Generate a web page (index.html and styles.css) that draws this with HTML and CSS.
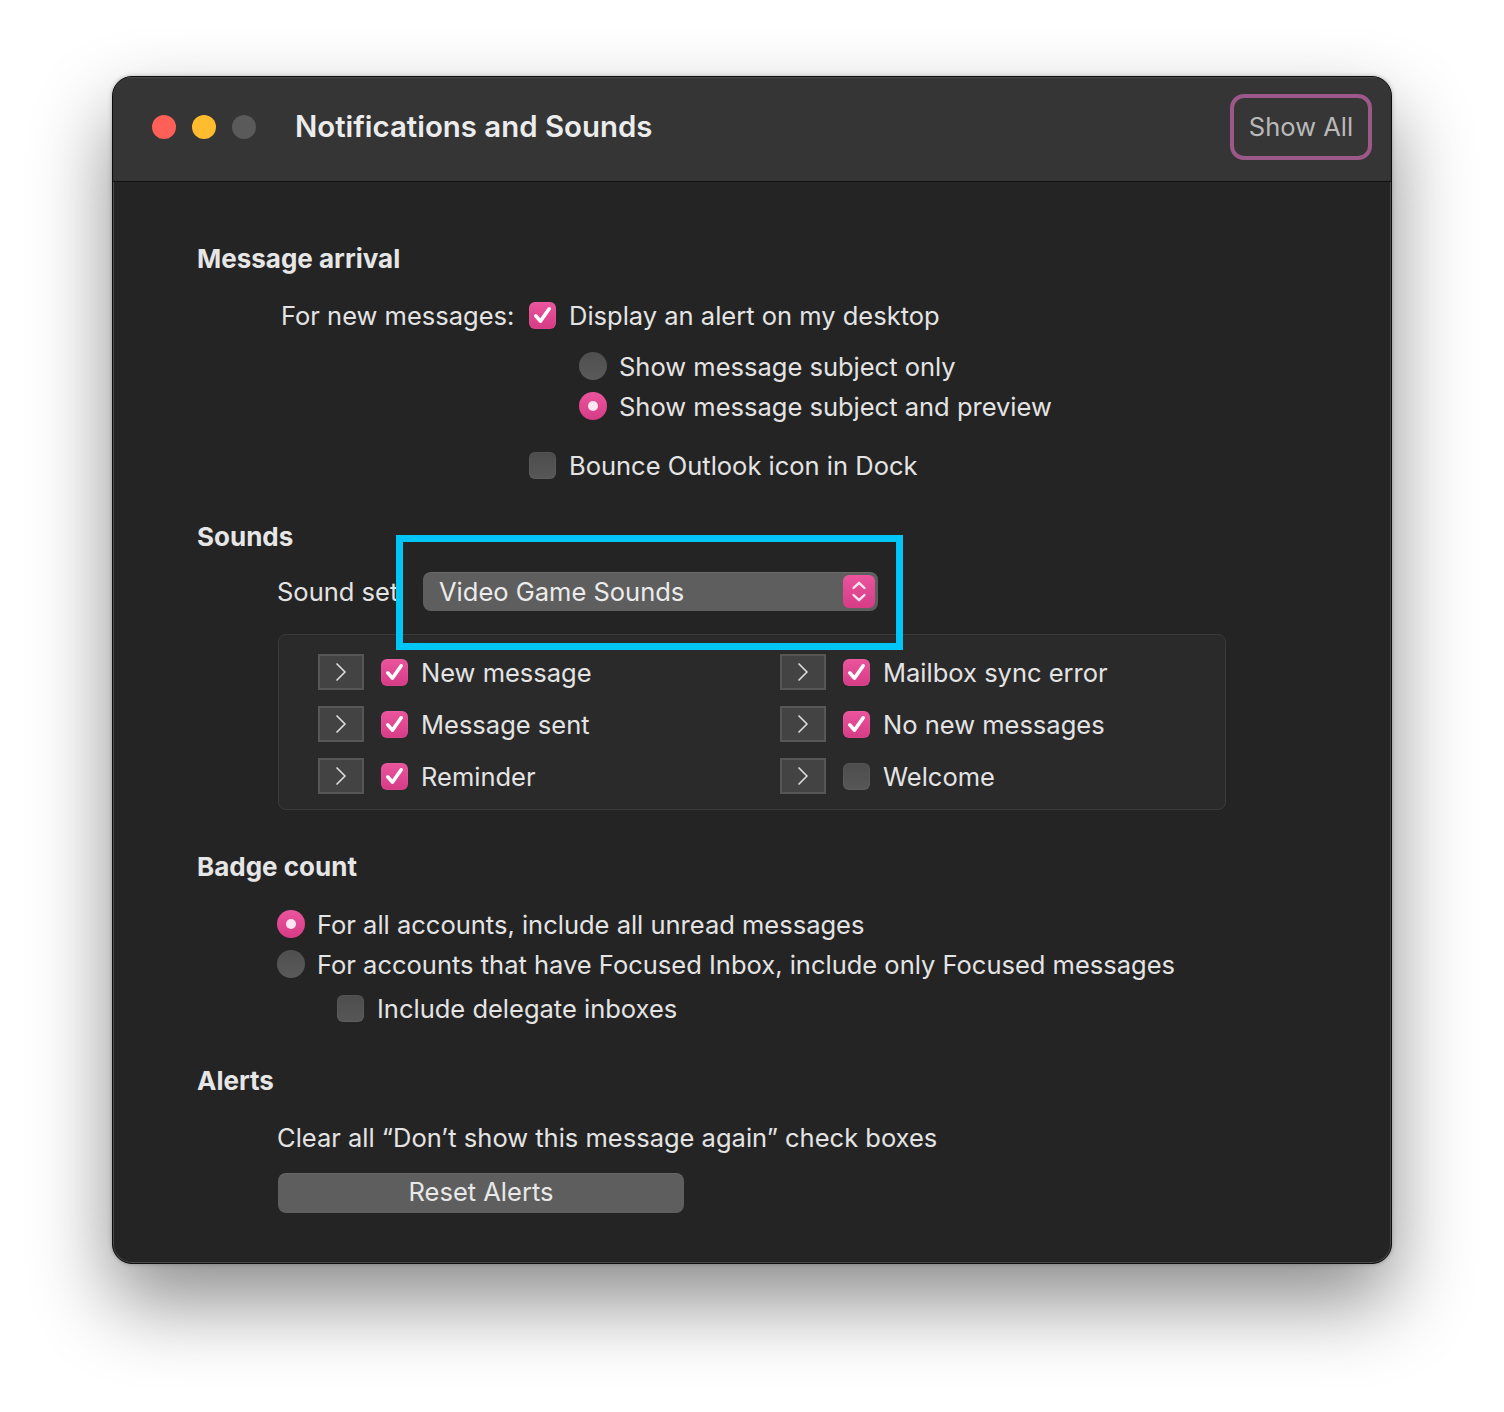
FILE: index.html
```html
<!DOCTYPE html>
<html lang="en">
<head>
<meta charset="utf-8">
<title>Notifications and Sounds</title>
<link rel="stylesheet" href="styles.css">
</head>
<body>
<div class="window">
  <header class="titlebar">
    <div class="lights">
      <span class="light red"></span>
      <span class="light yellow"></span>
      <span class="light gray"></span>
    </div>
    <h1 class="title">Notifications and Sounds</h1>
    <button class="show-all">Show All</button>
  </header>

  <main class="content">
    <section class="sec arrival">
      <h2 class="sec-title">Message arrival</h2>
      <div class="row for-new">
        <span class="lbl lbl-new">For new messages:</span>
        <span class="cb on"><svg viewBox="0 0 27 27"><path d="M6.8 13.8 L11.4 19.2 L20.2 6.8" /></svg></span>
        <span class="txt">Display an alert on my desktop</span>
      </div>
      <div class="radios-a">
        <div class="row"><span class="radio"></span><span class="txt">Show message subject only</span></div>
        <div class="row"><span class="radio on"></span><span class="txt">Show message subject and preview</span></div>
      </div>
      <div class="row bounce">
        <span class="cb"></span>
        <span class="txt">Bounce Outlook icon in Dock</span>
      </div>
    </section>

    <section class="sec sounds">
      <h2 class="sec-title">Sounds</h2>
      <div class="row sound-set">
        <span class="lbl lbl-set">Sound set</span>
        <div class="select">
          <span class="select-text">Video Game Sounds</span>
          <span class="stepper"><svg viewBox="0 0 32 33"><path d="M10.5 13 L16 7.8 L21.5 13 M10.5 20 L16 25.2 L21.5 20" /></svg></span>
          <div class="highlight"></div>
        </div>
      </div>
      <div class="sound-box">
        <div class="srow"><span class="chev"><svg viewBox="0 0 42 32"><path d="M17 8 L25 16 L17 24"/></svg></span><span class="cb on"><svg viewBox="0 0 27 27"><path d="M6.8 13.8 L11.4 19.2 L20.2 6.8" /></svg></span><span class="txt">New message</span></div>
        <div class="srow"><span class="chev"><svg viewBox="0 0 42 32"><path d="M17 8 L25 16 L17 24"/></svg></span><span class="cb on"><svg viewBox="0 0 27 27"><path d="M6.8 13.8 L11.4 19.2 L20.2 6.8" /></svg></span><span class="txt">Mailbox sync error</span></div>
        <div class="srow"><span class="chev"><svg viewBox="0 0 42 32"><path d="M17 8 L25 16 L17 24"/></svg></span><span class="cb on"><svg viewBox="0 0 27 27"><path d="M6.8 13.8 L11.4 19.2 L20.2 6.8" /></svg></span><span class="txt">Message sent</span></div>
        <div class="srow"><span class="chev"><svg viewBox="0 0 42 32"><path d="M17 8 L25 16 L17 24"/></svg></span><span class="cb on"><svg viewBox="0 0 27 27"><path d="M6.8 13.8 L11.4 19.2 L20.2 6.8" /></svg></span><span class="txt">No new messages</span></div>
        <div class="srow"><span class="chev"><svg viewBox="0 0 42 32"><path d="M17 8 L25 16 L17 24"/></svg></span><span class="cb on"><svg viewBox="0 0 27 27"><path d="M6.8 13.8 L11.4 19.2 L20.2 6.8" /></svg></span><span class="txt">Reminder</span></div>
        <div class="srow"><span class="chev"><svg viewBox="0 0 42 32"><path d="M17 8 L25 16 L17 24"/></svg></span><span class="cb"></span><span class="txt">Welcome</span></div>
      </div>
    </section>

    <section class="sec badge">
      <h2 class="sec-title">Badge count</h2>
      <div class="radios-b">
        <div class="row"><span class="radio on"></span><span class="txt">For all accounts, include all unread messages</span></div>
        <div class="row"><span class="radio"></span><span class="txt">For accounts that have Focused Inbox, include only Focused messages</span></div>
      </div>
      <div class="row delegate">
        <span class="cb"></span>
        <span class="txt">Include delegate inboxes</span>
      </div>
    </section>

    <section class="sec alerts">
      <h2 class="sec-title">Alerts</h2>
      <div class="row clear">
        <span class="txt">Clear all “Don’t show this message again” check boxes</span>
      </div>
      <button class="reset">Reset Alerts</button>
    </section>
  </main>
</div>
</body>
</html>
```

FILE: styles.css
```css
* { box-sizing: border-box; }

html, body {
  margin: 0;
  padding: 0;
  background: #ffffff;
}

body {
  width: 1504px;
  height: 1412px;
  padding: 76px 0 0 112px;
  font-family: Inter, "Noto Sans", "Liberation Sans", sans-serif;
  color: #e4e4e4;
}

.window {
  width: 1280px;
  height: 1188px;
  border-radius: 20px;
  background: #242424;
  border: 1px solid #0e0e0e;
  box-shadow:
    inset 0 0 0 1px #4a4a4a,
    0 38px 80px rgba(0, 0, 0, 0.45),
    0 0 4px rgba(0, 0, 0, 0.25);
  overflow: hidden;
  display: flex;
  flex-direction: column;
}

/* ---------- title bar ---------- */
.titlebar {
  height: 105px;
  flex: none;
  background: #353535;
  border-bottom: 1px solid #111;
  box-shadow: inset 0 1px 0 #4a4a4a;
  display: flex;
  align-items: center;
  padding: 0 19px 5px 39px;
}

.lights {
  display: flex;
  gap: 16px;
}

.light {
  width: 24px;
  height: 24px;
  border-radius: 50%;
  display: block;
}
.light.red { background: #fe5f57; }
.light.yellow { background: #febc2e; }
.light.gray { background: #5a5a5a; }

.title {
  margin: 0 0 0 39px;
  font-size: 29.4px;
  font-weight: 600;
  color: #ececec;
  flex: 1;
}

.show-all {
  width: 142px;
  height: 66px;
  border: 4px solid #9b5888;
  border-radius: 14px;
  background: #363636;
  color: #b9b9b9;
  font-family: inherit;
  font-size: 25.5px;
  padding: 0;
  margin-top: 0;
}

/* ---------- content ---------- */
.content {
  padding: 57px 0 0 84px;
  font-size: 25.5px;
}

.sec-title {
  margin: 0;
  height: 40px;
  line-height: 40px;
  font-size: 26px;
  font-weight: 700;
  color: #e6e6e6;
}

.row {
  display: flex;
  align-items: center;
  height: 40px;
  white-space: nowrap;
}

.txt { color: #e4e4e4; }

/* checkbox */
.cb {
  width: 27px;
  height: 27px;
  border-radius: 6px;
  background: linear-gradient(#4d4d4d, #575757);
  box-shadow: inset 0 0 0 1px rgba(255,255,255,0.04);
  flex: none;
  display: inline-flex;
  margin-right: 13px;
}
.cb.on {
  background: linear-gradient(#ea559d, #d63c86);
}
.cb svg { width: 27px; height: 27px; }
.cb svg path {
  fill: none;
  stroke: #fff;
  stroke-width: 3.6;
  stroke-linecap: round;
  stroke-linejoin: round;
}

/* radio */
.radio {
  width: 28px;
  height: 28px;
  border-radius: 50%;
  background: linear-gradient(#4f4f4f, #5a5a5a);
  flex: none;
  margin-right: 12px;
  position: relative;
}
.radio.on {
  background: linear-gradient(#ea559d, #d63c86);
}
.radio.on::after {
  content: "";
  position: absolute;
  left: 9px;
  top: 9px;
  width: 10px;
  height: 10px;
  border-radius: 50%;
  background: #fde6f1;
}

/* arrival */
.for-new {
  margin-top: 16px;
  padding-left: 84px;
}
.lbl-new { width: 248px; }

.radios-a {
  margin-top: 11px;
  padding-left: 382px;
}
.bounce {
  margin-top: 19px;
  padding-left: 332px;
}

/* sounds */
.sounds { margin-top: 32px; }

.sound-set {
  margin-top: 15px;
  padding-left: 80px;
  align-items: flex-start;
}
.lbl-set { width: 146px; line-height: 40px; }

.select {
  position: relative;
  width: 455px;
  height: 39px;
  border-radius: 8px;
  background: #5e5e5e;
  box-shadow: inset 0 1px 0 rgba(255,255,255,0.08);
  display: flex;
  align-items: center;
  padding: 0 3px 0 16px;
}
.select-text {
  flex: 1;
  color: #ececec;
}
.stepper {
  width: 32px;
  height: 33px;
  border-radius: 6px;
  background: linear-gradient(#ea559d, #d63c86);
  display: flex;
}
.stepper svg { width: 32px; height: 33px; }
.stepper svg path {
  fill: none;
  stroke: #fde6f1;
  stroke-width: 2.4;
  stroke-linecap: round;
  stroke-linejoin: round;
}

.highlight {
  position: absolute;
  left: -27px;
  top: -37px;
  width: 507px;
  height: 115px;
  border: 7px solid #00c6f8;
  pointer-events: none;
}

.sound-box {
  margin-top: 22px;
  margin-left: 81px;
  width: 948px;
  height: 176px;
  border: 1px solid #3a3a3a;
  border-radius: 8px;
  background: #2a2a2a;
  display: grid;
  grid-template-columns: 462px 1fr;
  grid-auto-rows: 52px;
  padding: 11px 0 0 39px;
}

.srow {
  display: flex;
  align-items: center;
  white-space: nowrap;
}

.chev {
  width: 46px;
  height: 36px;
  background: #434343;
  border: 2px solid #575757;
  flex: none;
  margin-right: 17px;
  display: flex;
}
.chev svg { width: 42px; height: 32px; display: block; }
.chev svg path {
  fill: none;
  stroke: #dcdcdc;
  stroke-width: 1.7;
  stroke-linecap: round;
  stroke-linejoin: round;
}

/* badge */
.badge { margin-top: 37px; }
.radios-b {
  margin-top: 17px;
  padding-left: 80px;
}
.delegate {
  margin-top: 4px;
  padding-left: 140px;
}

/* alerts */
.alerts { margin-top: 33px; }
.clear {
  margin-top: 16px;
  padding-left: 80px;
}
.reset {
  display: block;
  margin: 16px 0 0 81px;
  width: 406px;
  height: 40px;
  border: none;
  border-radius: 8px;
  background: #5e5e5e;
  box-shadow: inset 0 1px 0 rgba(255,255,255,0.06);
  color: #e8e8e8;
  font-family: inherit;
  font-size: 25.5px;
  padding: 0 0 3px 0;
}
```
